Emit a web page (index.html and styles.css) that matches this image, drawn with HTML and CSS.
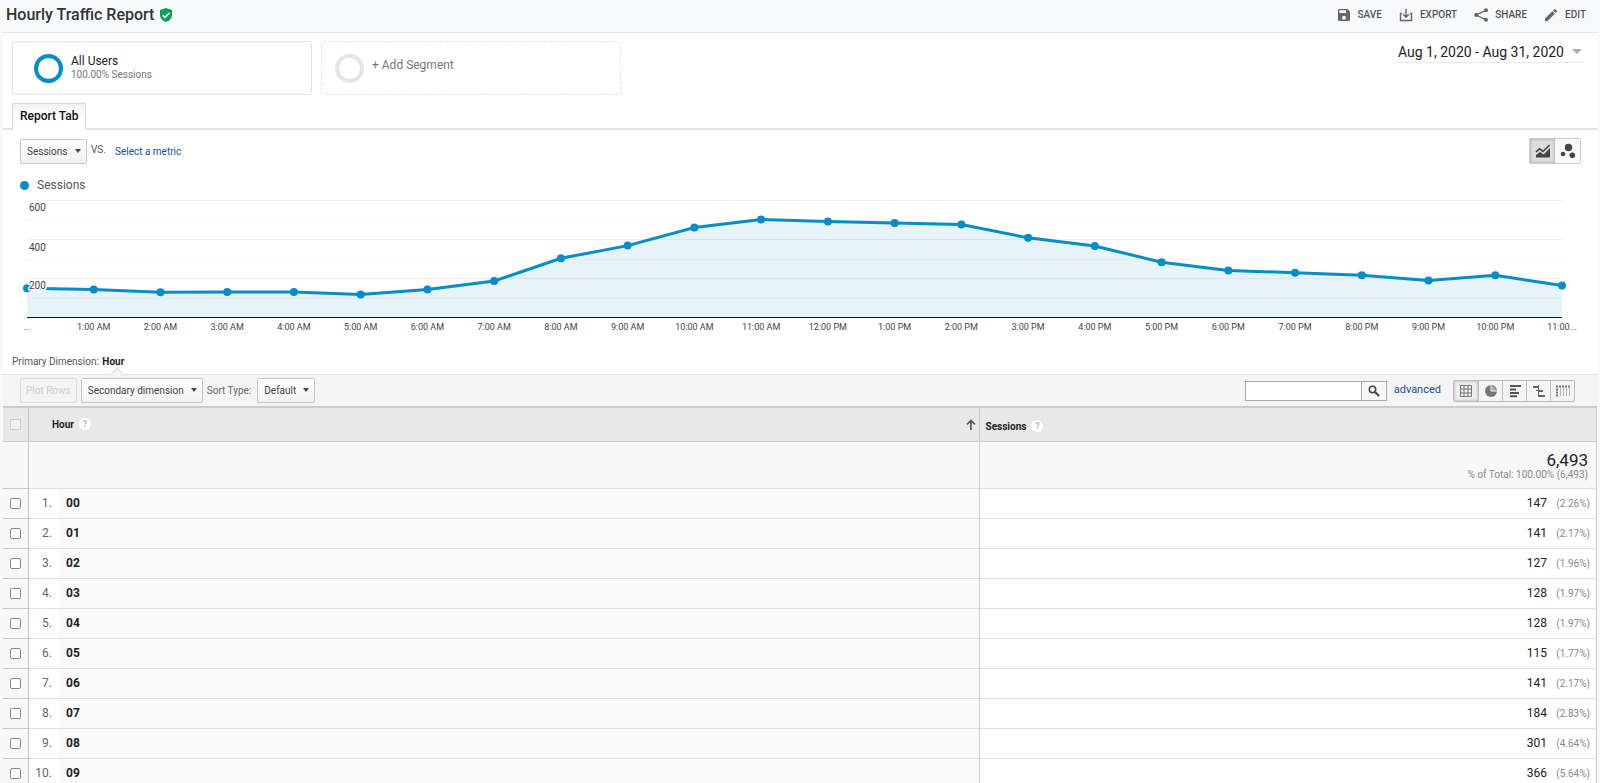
FILE: index.html
```html
<!DOCTYPE html>
<html lang="en">
<head>
<meta charset="utf-8">
<meta name="viewport" content="width=device-width, initial-scale=1">
<title>Hourly Traffic Report</title>
<link rel="stylesheet" href="styles.css">
</head>
<body>
<header class="topbar">
  <h1 class="title">Hourly Traffic Report</h1>
  <svg class="shield" width="12" height="14" viewBox="0 0 12 14" aria-hidden="true"><path d="M6 0 12 2v5c0 3.300-2.500 6-6 7C2.500 13 0 10.300 0 7V2z" fill="#0f9d58"/><path d="m2.700 7 2.300 2.300 4.500-4.600" fill="none" stroke="#fff" stroke-width="1.600"/></svg>
  <nav class="actions" aria-label="Report actions">
    <button class="action" type="button"><svg width="16" height="16" viewBox="0 0 24 24"><path d="M17 3H5a2 2 0 0 0-2 2v14a2 2 0 0 0 2 2h14a2 2 0 0 0 2-2V7zm-5 16a3 3 0 1 1 0-6 3 3 0 0 1 0 6zm3-10H5V5h10z"/></svg>Save</button>
    <button class="action" type="button"><svg width="16" height="16" viewBox="0 0 16 16"><path d="M4 6.500H2.500v7h11v-7H12M8 2v8M5.200 7.300 8 10.200l2.800-2.900" fill="none" stroke="#666" stroke-width="1.400"/></svg>Export</button>
    <button class="action" type="button"><svg width="16" height="16" viewBox="0 0 16 16"><path d="M13 3.300 3.200 8l9.800 4.800" fill="none" stroke="#666" stroke-width="1.300"/><circle cx="13" cy="3.200" r="2"/><circle cx="3.200" cy="8" r="2"/><circle cx="13" cy="12.800" r="2"/></svg>Share</button>
    <button class="action" type="button"><svg width="16" height="16" viewBox="0 0 24 24"><path d="M3 17.250V21h3.750L17.810 9.940l-3.750-3.750zM20.710 7.040a1 1 0 0 0 0-1.410l-2.340-2.340a1 1 0 0 0-1.410 0l-1.830 1.830 3.750 3.750z"/></svg>Edit</button>
  </nav>
</header>

<main class="report">
  <section class="segments" aria-label="Segments">
    <button class="segment" type="button"><span class="ring"></span><span class="segment-text"><span class="segment-name">All Users</span><span class="segment-share">100.00% Sessions</span></span></button>
    <button class="segment segment-add" type="button"><span class="ring"></span><span class="segment-text">+ Add Segment</span></button>
    <button class="dates" type="button">Aug 1, 2020 - Aug 31, 2020<span class="dates-caret"></span></button>
  </section>

  <div class="tabs"><a class="tab" href="#report">Report Tab</a></div>

  <section class="explorer" id="report">
    <div class="metrics">
      <span class="picker"><select class="select" aria-label="Metric"><option>Sessions</option></select></span>
      <span class="versus">VS.</span>
      <a class="link metric-link" href="#metric">Select a metric</a>
      <div class="chart-types">
        <button class="chart-type chart-type-on" type="button" aria-label="Line chart"><svg width="16" height="16" viewBox="0 0 16 16"><path d="M1 14.500V12l4-3 3.500 2.500L15 5v9.500z" fill="#444"/><path d="m1 8.800 3.500-2.900 3.500 2.600L14.600 2" fill="none" stroke="#444" stroke-width="1.700"/></svg></button>
        <button class="chart-type" type="button" aria-label="Motion chart"><svg width="16" height="16" viewBox="0 0 16 16" fill="#444"><circle cx="8.500" cy="4.500" r="3.700"/><circle cx="3" cy="11" r="2.300"/><circle cx="12.300" cy="12.300" r="2.800"/></svg></button>
      </div>
    </div>
    <div class="legend"><span class="legend-dot"></span>Sessions</div>
    <svg class="chart" role="img" aria-label="Sessions by hour">
      <g class="grid">
        <rect width="100%" height="1" y="0"/><rect class="minor" width="100%" height="1" y="20"/>
        <rect width="100%" height="1" y="39"/><rect class="minor" width="100%" height="1" y="59"/>
        <rect width="100%" height="1" y="78"/><rect class="minor" width="100%" height="1" y="98"/>
      </g>
      <svg class="plot" width="100%" height="117" viewBox="0 0 23 117" preserveAspectRatio="none">
        <path class="area" d="M0 117V88.300L1 89.500 2 92.200 3 92 4 92 5 94.600 6 89.500 7 81.100 8 58.300 9 45.600 10 27.500 11 19.500 12 21.400 13 23 14 24.600 15 37.800 16 46 17 62.200 18 70.400 19 72.700 20 75.300 21 80.500 22 75.300 23 85.600V117z"/>
        <polyline class="line" points="0,88.300 1,89.500 2,92.200 3,92 4,92 5,94.600 6,89.500 7,81.100 8,58.300 9,45.600 10,27.500 11,19.500 12,21.400 13,23 14,24.600 15,37.800 16,46 17,62.200 18,70.400 19,72.700 20,75.300 21,80.500 22,75.300 23,85.600"/>
      </svg>
      <g class="points">
        <circle cx="0%" cy="88.300" r="4"/><circle cx="4.348%" cy="89.500" r="4"/><circle cx="8.696%" cy="92.200" r="4"/><circle cx="13.043%" cy="92" r="4"/><circle cx="17.391%" cy="92" r="4"/><circle cx="21.739%" cy="94.600" r="4"/>
        <circle cx="26.087%" cy="89.500" r="4"/><circle cx="30.435%" cy="81.100" r="4"/><circle cx="34.783%" cy="58.300" r="4"/><circle cx="39.130%" cy="45.600" r="4"/><circle cx="43.478%" cy="27.500" r="4"/><circle cx="47.826%" cy="19.500" r="4"/>
        <circle cx="52.174%" cy="21.400" r="4"/><circle cx="56.522%" cy="23" r="4"/><circle cx="60.870%" cy="24.600" r="4"/><circle cx="65.217%" cy="37.800" r="4"/><circle cx="69.565%" cy="46" r="4"/><circle cx="73.913%" cy="62.200" r="4"/>
        <circle cx="78.261%" cy="70.400" r="4"/><circle cx="82.609%" cy="72.700" r="4"/><circle cx="86.957%" cy="75.300" r="4"/><circle cx="91.304%" cy="80.500" r="4"/><circle cx="95.652%" cy="75.300" r="4"/><circle cx="100%" cy="85.600" r="4"/>
      </g>
      <rect class="axis" width="100%" height="1" y="117"/>
      <g class="scale"><text x="2" y="11">600</text><text x="2" y="51">400</text><text x="2" y="89">200</text></g>
      <g class="hours">
        <text x="0%" y="130">...</text><text x="4.348%" y="130">1:00 AM</text><text x="8.696%" y="130">2:00 AM</text><text x="13.043%" y="130">3:00 AM</text><text x="17.391%" y="130">4:00 AM</text><text x="21.739%" y="130">5:00 AM</text>
        <text x="26.087%" y="130">6:00 AM</text><text x="30.435%" y="130">7:00 AM</text><text x="34.783%" y="130">8:00 AM</text><text x="39.130%" y="130">9:00 AM</text><text x="43.478%" y="130">10:00 AM</text><text x="47.826%" y="130">11:00 AM</text>
        <text x="52.174%" y="130">12:00 PM</text><text x="56.522%" y="130">1:00 PM</text><text x="60.870%" y="130">2:00 PM</text><text x="65.217%" y="130">3:00 PM</text><text x="69.565%" y="130">4:00 PM</text><text x="73.913%" y="130">5:00 PM</text>
        <text x="78.261%" y="130">6:00 PM</text><text x="82.609%" y="130">7:00 PM</text><text x="86.957%" y="130">8:00 PM</text><text x="91.304%" y="130">9:00 PM</text><text x="95.652%" y="130">10:00 PM</text><text x="100%" y="130">11:00...</text>
      </g>
    </svg>
  </section>

  <div class="dimension">Primary Dimension: <strong class="dimension-name">Hour</strong></div>

  <div class="toolbar">
    <button class="plot-rows" type="button" disabled>Plot Rows</button>
    <span class="picker"><select class="select" aria-label="Secondary dimension"><option>Secondary dimension</option></select></span>
    <label class="sort-label" for="sort">Sort Type:</label>
    <span class="picker"><select class="select" id="sort"><option>Default</option></select></span>
    <form class="search">
      <input class="search-box" type="text" aria-label="Search rows"><button class="search-go" type="button" aria-label="Search"><svg width="12" height="12" viewBox="0 0 12 12" fill="none" stroke="#444"><circle cx="4.500" cy="4.500" r="3.200" stroke-width="1.500"/><path d="m7 7 4 4" stroke-width="2.200"/></svg></button>
    </form>
    <a class="link advanced" href="#advanced">advanced</a>
    <div class="views">
      <button class="view view-on" type="button" aria-label="Data"><svg width="14" height="14" viewBox="0 0 14 14"><path d="M1.500 1.500h11v11h-11zM1.500 5h11M1.500 9h11M5 1.500v11M9 1.500v11" fill="none" stroke="#777"/></svg></button>
      <button class="view" type="button" aria-label="Percentage"><svg width="14" height="14" viewBox="0 0 14 14"><circle cx="7" cy="7" r="6" fill="#777"/><path d="M7 2a5 5 0 0 1 5 5H7z" fill="#aaa"/><path d="M7 1v6h6" fill="none" stroke="#f5f5f5"/></svg></button>
      <button class="view" type="button" aria-label="Performance"><svg width="14" height="14" viewBox="0 0 14 14" fill="#555"><path d="M2 1h11v2H2zM2 4.500h6v2H2zM2 8h9v2H2zM2 11.300h7v2H2z"/></svg></button>
      <button class="view" type="button" aria-label="Comparison"><svg width="14" height="14" viewBox="0 0 14 14" fill="#666"><path d="M6 1h1v12H6zM1 2h5v2H1zM7 6h4v2H7zM4 6h2v1H4zM7 11h6v2H7z"/></svg></button>
      <button class="view" type="button" aria-label="Pivot"><svg width="14" height="14" viewBox="0 0 14 14" fill="none" stroke="#777"><path d="M0 2.500h14" stroke-width="2" stroke-dasharray="2 1"/><path d="M1 4.500v8" stroke-width="2" stroke-dasharray="2 1"/><path d="M4.500 4.500v8M7.500 4.500v8M10.500 4.500v8M13.500 4.500v8" stroke-dasharray="1 1"/></svg></button>
    </div>
  </div>

  <table class="data">
    <colgroup><col class="col-check"><col class="col-index"><col><col class="col-sessions"></colgroup>
    <thead>
      <tr>
        <th class="check"><input class="tick tick-off" type="checkbox" aria-label="Select all rows" disabled></th>
        <th class="hour-head" colspan="2"><div class="head-line">Hour<span class="help">?</span><svg class="sort" width="10" height="12" viewBox="0 0 10 12"><path d="M5 11V2M1 5.500l4-4 4 4" fill="none" stroke="#555" stroke-width="1.700"/></svg></div></th>
        <th class="sessions-head"><div class="head-line">Sessions<span class="help">?</span></div></th>
      </tr>
    </thead>
    <tbody>
      <tr class="total"><td class="check"></td><td class="total-blank" colspan="2"></td><td class="total-cell"><div class="total-value">6,493</div><div class="total-note">% of Total: 100.00% (6,493)</div></td></tr>
      <tr><td class="check"><input class="tick" type="checkbox" aria-label="Select 00"></td><td class="index">1.</td><td class="hour">00</td><td class="sessions">147<span class="share">(2.26%)</span></td></tr>
      <tr><td class="check"><input class="tick" type="checkbox" aria-label="Select 01"></td><td class="index">2.</td><td class="hour">01</td><td class="sessions">141<span class="share">(2.17%)</span></td></tr>
      <tr><td class="check"><input class="tick" type="checkbox" aria-label="Select 02"></td><td class="index">3.</td><td class="hour">02</td><td class="sessions">127<span class="share">(1.96%)</span></td></tr>
      <tr><td class="check"><input class="tick" type="checkbox" aria-label="Select 03"></td><td class="index">4.</td><td class="hour">03</td><td class="sessions">128<span class="share">(1.97%)</span></td></tr>
      <tr><td class="check"><input class="tick" type="checkbox" aria-label="Select 04"></td><td class="index">5.</td><td class="hour">04</td><td class="sessions">128<span class="share">(1.97%)</span></td></tr>
      <tr><td class="check"><input class="tick" type="checkbox" aria-label="Select 05"></td><td class="index">6.</td><td class="hour">05</td><td class="sessions">115<span class="share">(1.77%)</span></td></tr>
      <tr><td class="check"><input class="tick" type="checkbox" aria-label="Select 06"></td><td class="index">7.</td><td class="hour">06</td><td class="sessions">141<span class="share">(2.17%)</span></td></tr>
      <tr><td class="check"><input class="tick" type="checkbox" aria-label="Select 07"></td><td class="index">8.</td><td class="hour">07</td><td class="sessions">184<span class="share">(2.83%)</span></td></tr>
      <tr><td class="check"><input class="tick" type="checkbox" aria-label="Select 08"></td><td class="index">9.</td><td class="hour">08</td><td class="sessions">301<span class="share">(4.64%)</span></td></tr>
      <tr><td class="check"><input class="tick" type="checkbox" aria-label="Select 09"></td><td class="index">10.</td><td class="hour">09</td><td class="sessions">366<span class="share">(5.64%)</span></td></tr>
    </tbody>
  </table>
</main>
</body>
</html>
```
FILE: styles.css
```css
* { box-sizing: border-box; }
html { overflow: hidden; }
body { margin: 0; background: #f8f9fb; color: #222; font-family: Roboto, "Liberation Sans", sans-serif; font-size: 12px; }
button, input, select { font: inherit; color: inherit; margin: 0; }
button { padding: 0; border: 0; background: none; }
svg { display: block; flex: none; }

.topbar { display: flex; align-items: center; height: 32px; padding: 0 14px 3px 6px; }
.title { margin: 0; font-size: 16px; line-height: 20px; font-weight: 500; color: #333; }
.shield { margin-left: 6px; }
.actions { display: flex; gap: 16px; margin-left: auto; }
.action { display: flex; align-items: center; gap: 6px; font-size: 10px; font-weight: 500; text-transform: uppercase; color: #555; fill: #666; }

.report { margin: 0 2px 0 3px; background: #fff; border-top: 1px solid #e2e4e6; }
.segments { display: flex; align-items: flex-start; gap: 9px; padding: 8px 14px 8px 9px; }
.segment { display: flex; align-items: center; gap: 8px; width: 300px; height: 54px; padding-left: 21px; border: 1px solid #e2e2e2; border-radius: 3px; text-align: left; }
.ring { width: 29px; height: 29px; border: 4px solid #058dc7; border-radius: 50%; }
.segment-text { padding-bottom: 2px; }
.segment-name { display: block; line-height: 15px; }
.segment-share { display: block; font-size: 10px; line-height: 12px; color: #777; }
.segment-add { border-style: dashed; padding-left: 13px; color: #777; }
.segment-add .ring { border-color: #e5e5e5; }
.segment-add .segment-text { padding-bottom: 6px; }
.dates { display: flex; align-items: center; gap: 8px; height: 22px; margin-left: auto; padding: 0 2px; border-bottom: 1px solid #e8e8e8; font-size: 14px; }
.dates-caret { border: 5px solid transparent; border-top-color: #aaa; border-bottom: 0; }

.tabs { display: flex; padding-left: 9px; border-bottom: 2px solid #e2e2e2; }
.tab { margin-bottom: -2px; padding: 4px 6px 6px 7px; border: 1px solid #d8d8d8; border-bottom: 0; background: linear-gradient(#f3f3f3, #fff 60%); line-height: 16px; font-weight: 500; color: #111; text-decoration: none; }

.explorer { padding: 8px 17px 0; }
.metrics { display: flex; align-items: center; height: 26px; }
.picker { position: relative; display: inline-flex; }
.picker::after { content: ""; position: absolute; right: 6px; top: 10px; border: 3px solid transparent; border-top: 4px solid #444; border-bottom: 0; pointer-events: none; }
.select { appearance: none; height: 25px; padding: 0 18px 0 6px; border: 1px solid #c6c6c6; border-radius: 2px; background: linear-gradient(#fff, #f2f2f2); font-size: 10px; color: #444; }
.versus { margin: 0 9px 4px 4px; color: #555; font-size: 10px; }
.link { color: #15509a; text-decoration: none; }
.metric-link { font-size: 10px; }
.chart-types { display: flex; margin-left: auto; border: 1px solid #ccc; border-radius: 2px; }
.chart-type { display: grid; place-items: center; width: 25px; height: 24px; background: #f8f8f8; }
.chart-type-on { background: #ddd; box-shadow: inset 0 0 3px #999; }
.legend { display: flex; align-items: center; gap: 8px; margin-top: 13px; line-height: 16px; color: #555; }
.legend-dot { width: 9px; height: 9px; border-radius: 50%; background: #058dc7; }

.chart { width: calc(100% - 26px); height: 136px; margin: 7px 0 0 7px; overflow: visible; font-size: 9px; }
.grid { fill: #f0f0f0; }
.grid .minor { fill: #f8f8f8; }
.plot { overflow: visible; }
.area { fill: #058dc7; fill-opacity: .1; }
.line { fill: none; stroke: #058dc7; stroke-width: 3px; vector-effect: non-scaling-stroke; }
.points { fill: #058dc7; }
.axis { fill: #111; }
.scale { fill: #444; stroke: #fff; stroke-width: 3px; paint-order: stroke; font-size: 10px; }
.hours { fill: #444; text-anchor: middle; }

.dimension { padding: 19px 9px 5px; font-size: 10px; line-height: 14px; color: #555; border-bottom: 1px solid #e2e2e2; }
.dimension-name { position: relative; margin-left: 1px; font-weight: 700; color: #222; }
.dimension-name::after { content: ""; position: absolute; left: 50%; bottom: -10px; width: 7px; height: 7px; border: 1px solid #ddd; border-width: 1px 0 0 1px; background: #f4f4f4; transform: rotate(45deg); }

.toolbar { display: flex; align-items: center; height: 32px; margin-bottom: -1px; padding: 0 23px 1px 17px; background: #f4f4f4; font-size: 10px; }
.plot-rows { height: 25px; margin-right: 4px; padding: 0 5px; border: 1px solid #ddd; border-radius: 2px; color: #ccc; }
.sort-label { margin: 0 6px 0 4px; color: #666; }
.search { display: flex; margin-left: auto; }
.search-box { width: 117px; height: 20px; border: 1px solid #aaa; background: #fff; }
.search-go { display: grid; place-items: center; width: 25px; height: 20px; border: 1px solid #aaa; border-left: 0; background: #f8f8f8; }
.advanced { margin: 0 12px 2px 7px; font-size: 11px; }
.views { display: flex; border: 1px solid #bbb; border-radius: 2px; }
.view { display: grid; place-items: center; width: 24px; height: 20px; }
.view + .view { border-left: 1px solid #bbb; }
.view-on { background: #eee; box-shadow: inset 0 0 3px #aaa; }

.data { width: calc(100% - 1px); table-layout: fixed; border-collapse: separate; border-spacing: 0; border-top: 2px solid #ccc; border-right: 1px solid #ccc; }
.col-check { width: 26px; }
.col-index { width: 30px; }
.col-sessions { width: 38.7%; }
.data th { height: 34px; padding: 0; background: #e8e8e8; border-bottom: 1px solid #ccc; font-size: 10px; font-weight: 700; color: #222; text-align: left; }
.data td { height: 30px; padding: 0 0 2px; border-bottom: 1px solid #e0e0e0; }
.data .check { border-right: 1px solid #c4c4c4; text-align: center; }
.data td.check { background: #f8f8f8; border-bottom-color: #c8c8c8; }
.head-line { display: flex; align-items: center; }
.data .hour-head { padding: 0 3px 0 23px; border-right: 1px solid #ccc; }
.data .sessions-head { padding: 4px 6px 0; }
.help { display: grid; place-items: center; width: 12px; height: 12px; margin: 0 0 2px 5px; border-radius: 50%; background: #fff; color: #bbb; font-size: 9px; }
.sort { margin-left: auto; }
.tick { appearance: none; display: inline-block; width: 11px; height: 11px; border: 1px solid #888; border-radius: 2px; background: #fff; vertical-align: middle; }
.tick-off { border-color: #ccc; border-radius: 0; background: #eee; }
.data .total td { height: 47px; background: #f8f8f8; }
.data .total-blank { border-right: 1px solid #ccc; }
.data .total-cell { padding: 2px 8px 0 0; text-align: right; }
.total-value { font-size: 17px; line-height: 18px; }
.total-note { font-size: 10px; line-height: 12px; color: #888; }
.data .index { padding-right: 7px; text-align: right; color: #666; }
.data .hour { padding-left: 7px; background: #f9f9f9; border-right: 1px solid #ccc; font-weight: 700; color: #222; }
.data .sessions { padding-right: 6px; text-align: right; }
.share { display: inline-block; width: 43px; font-size: 10px; color: #888; }
```
